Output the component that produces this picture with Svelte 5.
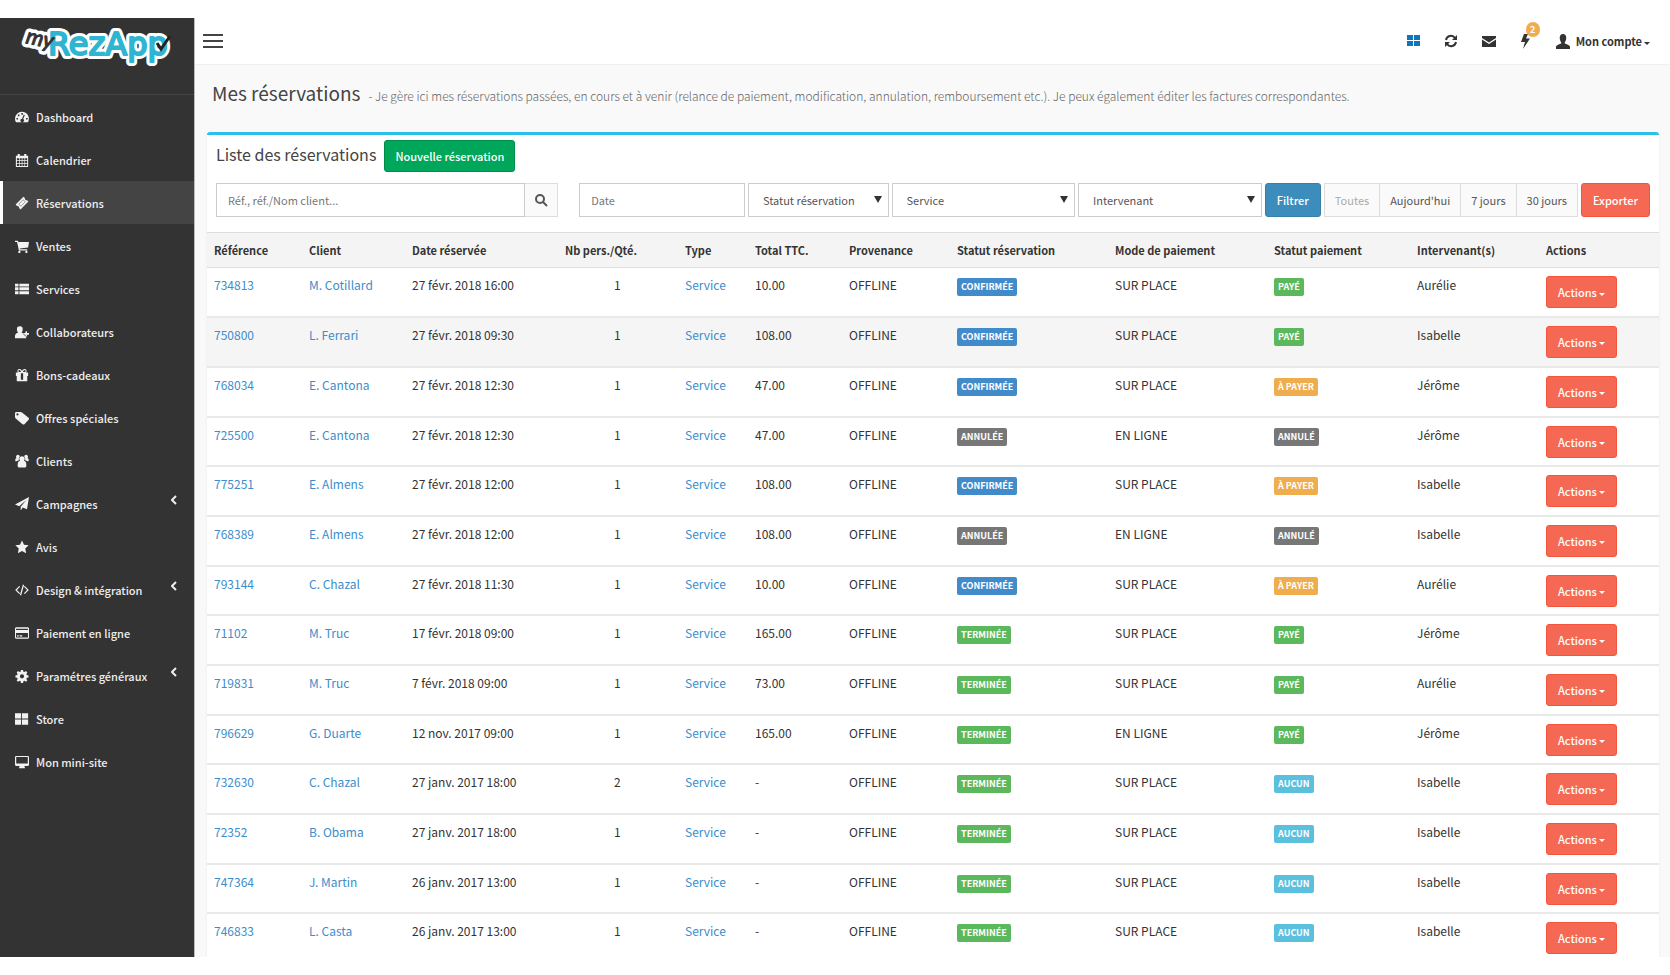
<script lang="ts">
  interface MenuItem {
    label: string;
    icon: string;
    expandable?: boolean;
  }

  interface Booking {
    ref: string;
    client: string;
    date: string;
    qty: number;
    total: string;
    status: string;
    mode: string;
    payment: string;
    staff: string;
  }

  const menu: MenuItem[] = [
    { label: 'Dashboard', icon: 'dashboard' },
    { label: 'Calendrier', icon: 'calendar' },
    { label: 'Réservations', icon: 'ticket' },
    { label: 'Ventes', icon: 'cart' },
    { label: 'Services', icon: 'list' },
    { label: 'Collaborateurs', icon: 'userplus' },
    { label: 'Bons-cadeaux', icon: 'gift' },
    { label: 'Offres spéciales', icon: 'tag' },
    { label: 'Clients', icon: 'users' },
    { label: 'Campagnes', icon: 'plane', expandable: true },
    { label: 'Avis', icon: 'star' },
    { label: 'Design & intégration', icon: 'code', expandable: true },
    { label: 'Paiement en ligne', icon: 'card' },
    { label: 'Paramétres généraux', icon: 'gear', expandable: true },
    { label: 'Store', icon: 'grid' },
    { label: 'Mon mini-site', icon: 'screen' },
  ];

  // 16x16 glyphs, filled with even-odd so inner shapes cut holes
  const icons: Record<string, string> = {
    dashboard:
      'M8 2a8 8 0 0 0-8 8c0 1.500.4 2.900 1.200 4h13.600A8 8 0 0 0 8 2zM7.200 3.500h1.800v1.800H7.200zM3.300 5.200h1.800V7H3.300zM1.700 9h1.800v1.800H1.700zM12.600 9h1.800v1.800h-1.800zM10 5.200l1.200.4-1.800 4.700a2 2 0 1 1-1.300-.4z',
    calendar:
      'M1 3h2V1h2.500v2h5V1H13v2h2v13H1zM2.200 6v2.300h2.400V6zm3.200 0v2.300h2.300V6zm3.100 0v2.300h2.300V6zm3.100 0v2.300h2.300V6zM2.200 9.200v2.300h2.400V9.200zm3.200 0v2.300h2.300V9.200zm3.100 0v2.300h2.300V9.200zm3.100 0v2.300h2.300V9.200zM2.200 12.400v2.400h2.400v-2.400zm3.200 0v2.400h2.300v-2.400zm3.100 0v2.400h2.300v-2.400zm3.100 0v2.400h2.300v-2.400z',
    ticket:
      'M9.700.8l1.600 1.600a2 2 0 0 0 2.400 2.400l1.600 1.600-9 9-1.600-1.600a2 2 0 0 0-2.400-2.400L.7 9.800zM9.300 4L4 9.300l2.700 2.700L12 6.700zM9.300 4.500l2.200 2.200-4.800 4.800-2.200-2.200z',
    cart:
      'M0 2h3.300l.5 1.500H16l-1 6.300-9.500 1 .3 1H14V13H4.500L2.400 3.300H0zM5 13.500a1.300 1.300 0 1 1 0 2.600 1.300 1.300 0 0 1 0-2.600zM13 13.500a1.300 1.300 0 1 1 0 2.600 1.300 1.300 0 0 1 0-2.600z',
    list: 'M0 2h4v3H0zM5 2h11v3H5zM0 6h4v3.500H0zM5 6h11v3.500H5zM0 10.500h4V14H0zM5 10.500h11V14H5z',
    userplus:
      'M5.500 1.500a3.300 3.300 0 0 1 3.300 3.500c0 1.700-.8 3-1.700 3.700 1.600.5 2.900 1 3.600 1.800V12h2v3H0v-2.500c0-2 1.500-3 3.900-3.800C3 8 2.200 6.700 2.200 5a3.300 3.300 0 0 1 3.300-3.500zM12 7h1.800v2.200H16V11h-2.200v2.200H12V11H9.800V9.200H12z',
    gift:
      'M1 5h2.500A2.300 2.300 0 0 1 5 1c1.500 0 2.300 1 3 2.200C8.700 2 9.500 1 11 1a2.300 2.300 0 0 1 1.500 4H15v4h-1v6H2V9H1zM5 2.300a1.100 1.100 0 1 0 0 2.300h2C6.300 3.300 5.800 2.300 5 2.300zM11 2.300c-.8 0-1.300 1-2 2.300h2a1.100 1.100 0 1 0 0-2.300zM6.700 6v7.500h2.600V6z',
    tag: 'M0 2.500C0 1.700.7 1 1.500 1H6c.7 0 1.500.3 2 .8l7.500 6c.7.700.7 1.500 0 2.200l-4.700 5c-.7.700-1.500.6-2.200 0L.8 8.500C.3 8 0 7.500 0 6.800zM2.800 2.700a1.200 1.200 0 1 0 0 2.400 1.200 1.200 0 0 0 0-2.400z',
    users:
      'M3.300.8a2.300 2.300 0 0 1 2.200 2.100A3.600 3.600 0 0 0 4.300 6c0 .6.100 1 .4 1.500H3.500L1 8.500C.3 8 0 6 .6 5.300c.5-.4 1-.5 1.300-.5A2.300 2.300 0 0 1 3.300.8zM12.700.8a2.300 2.300 0 0 0-2.200 2.100A3.600 3.600 0 0 1 11.700 6c0 .6-.1 1-.4 1.500h1.200L15 8.500c.7-.5 1-2.500.4-3.200-.5-.4-1-.5-1.300-.5A2.300 2.300 0 0 0 12.700.8zM8 2.500a3 3 0 0 1 2.200 5.200c2 .3 2.800 2 2.800 5.300 0 1.500-.8 2.500-2 2.500H5c-1.200 0-2-1-2-2.500 0-3.300.8-5 2.800-5.300A3 3 0 0 1 8 2.500z',
    plane: 'M16 0l-2.300 14-4.800-2-2.400 3.500V11L13 3.300 4.800 10.500 0 8.500z',
    star: 'M8 .5l2.300 4.900 5.300.7-3.900 3.700 1 5.300L8 12.500l-4.700 2.600 1-5.300L.4 6.100l5.300-.7z',
    code:
      'M4.800 3.300L5.800 4.300 2.200 8l3.600 3.700-1 1L.2 8zM11.200 3.300l-1 1L13.800 8l-3.600 3.700 1 1L15.800 8zM9 1.800l1.400.4-3.400 12-1.400-.4z',
    card: 'M1 1.500h14l1 1v11l-1 1H1l-1-1v-11zM1.200 3v1.500h13.600V3zM1.200 8v5.200h13.600V8zM2.300 10.700h2V12h-2zM5.300 10.700h3V12h-3z',
    gear:
      'M6.800 1h2.400l.4 2 1.200.5 1.700-1.100 1.600 1.600-1.100 1.700.5 1.200 2 .4v2.400l-2 .4-.5 1.200 1.100 1.700-1.600 1.600-1.700-1.100-1.200.5-.4 2H6.800l-.4-2-1.200-.5-1.700 1.100L1.900 13 3 11.300l-.5-1.200-2-.4V7.300l2-.4L3 5.700 1.900 4l1.600-1.600 1.700 1.100L6.400 3zM8 6a2.400 2.400 0 1 0 0 4.800A2.400 2.400 0 0 0 8 6z',
    grid: 'M0 1.500h7V7.500H0zM8 1.500h7V7.500H8zM0 8.500h7v6H0zM8 8.500h7v6H8z',
    screen: 'M1 1h14l1 1v9.500l-1 1h-4.500l.8 1.500v1H4.700v-1l.8-1.500H1l-1-1V2zM1.400 2.400v7.200h13.200V2.400z',
  };

  const columns = [
    { title: 'Référence', width: 95 },
    { title: 'Client', width: 103 },
    { title: 'Date réservée', width: 153 },
    { title: 'Nb pers./Qté.', width: 120 },
    { title: 'Type', width: 70 },
    { title: 'Total TTC.', width: 94 },
    { title: 'Provenance', width: 108 },
    { title: 'Statut réservation', width: 158 },
    { title: 'Mode de paiement', width: 159 },
    { title: 'Statut paiement', width: 143 },
    { title: 'Intervenant(s)', width: 129 },
    { title: 'Actions', width: 120 },
  ];

  const rows: Booking[] = [
    { ref: '734813', client: 'M. Cotillard', date: '27 févr. 2018 16:00', qty: 1, total: '10.00', status: 'Confirmée', mode: 'SUR PLACE', payment: 'Payé', staff: 'Aurélie' },
    { ref: '750800', client: 'L. Ferrari', date: '27 févr. 2018 09:30', qty: 1, total: '108.00', status: 'Confirmée', mode: 'SUR PLACE', payment: 'Payé', staff: 'Isabelle' },
    { ref: '768034', client: 'E. Cantona', date: '27 févr. 2018 12:30', qty: 1, total: '47.00', status: 'Confirmée', mode: 'SUR PLACE', payment: 'À payer', staff: 'Jérôme' },
    { ref: '725500', client: 'E. Cantona', date: '27 févr. 2018 12:30', qty: 1, total: '47.00', status: 'Annulée', mode: 'EN LIGNE', payment: 'Annulé', staff: 'Jérôme' },
    { ref: '775251', client: 'E. Almens', date: '27 févr. 2018 12:00', qty: 1, total: '108.00', status: 'Confirmée', mode: 'SUR PLACE', payment: 'À payer', staff: 'Isabelle' },
    { ref: '768389', client: 'E. Almens', date: '27 févr. 2018 12:00', qty: 1, total: '108.00', status: 'Annulée', mode: 'EN LIGNE', payment: 'Annulé', staff: 'Isabelle' },
    { ref: '793144', client: 'C. Chazal', date: '27 févr. 2018 11:30', qty: 1, total: '10.00', status: 'Confirmée', mode: 'SUR PLACE', payment: 'À payer', staff: 'Aurélie' },
    { ref: '71102', client: 'M. Truc', date: '17 févr. 2018 09:00', qty: 1, total: '165.00', status: 'Terminée', mode: 'SUR PLACE', payment: 'Payé', staff: 'Jérôme' },
    { ref: '719831', client: 'M. Truc', date: '7 févr. 2018 09:00', qty: 1, total: '73.00', status: 'Terminée', mode: 'SUR PLACE', payment: 'Payé', staff: 'Aurélie' },
    { ref: '796629', client: 'G. Duarte', date: '12 nov. 2017 09:00', qty: 1, total: '165.00', status: 'Terminée', mode: 'EN LIGNE', payment: 'Payé', staff: 'Jérôme' },
    { ref: '732630', client: 'C. Chazal', date: '27 janv. 2017 18:00', qty: 2, total: '-', status: 'Terminée', mode: 'SUR PLACE', payment: 'Aucun', staff: 'Isabelle' },
    { ref: '72352', client: 'B. Obama', date: '27 janv. 2017 18:00', qty: 1, total: '-', status: 'Terminée', mode: 'SUR PLACE', payment: 'Aucun', staff: 'Isabelle' },
    { ref: '747364', client: 'J. Martin', date: '26 janv. 2017 13:00', qty: 1, total: '-', status: 'Terminée', mode: 'SUR PLACE', payment: 'Aucun', staff: 'Isabelle' },
    { ref: '746833', client: 'L. Casta', date: '26 janv. 2017 13:00', qty: 1, total: '-', status: 'Terminée', mode: 'SUR PLACE', payment: 'Aucun', staff: 'Isabelle' },
  ];

  const tones: Record<string, string> = {
    'Confirmée': 'blue',
    'Terminée': 'green',
    'Annulée': 'grey',
    'Payé': 'green',
    'À payer': 'orange',
    'Annulé': 'grey',
    'Aucun': 'cyan',
  };

  const ranges = ['Toutes', "Aujourd'hui", '7 jours', '30 jours'];

  let current = $state('Réservations');
  let range = $state('Toutes');
  let hovered = $state('750800');
  let search = $state('');
  let date = $state('');
</script>

<div class="app">
  <aside class="sidebar">
    <a class="logo" href="#accueil" aria-label="myRezApp">
      <svg width="160" height="52" viewBox="0 0 160 52">
        <g stroke-linejoin="round">
          <text class="rez halo" x="32" y="36">RezApp</text>
          <text class="my halo" x="9" y="24" transform="rotate(12 9 24)">my</text>
          <text class="rez" x="32" y="36">RezApp</text>
          <text class="my" x="9" y="24" transform="rotate(12 9 24)">my</text>
        </g>
        <path d="M141 24l4 6 9-13" fill="none" stroke="#222" stroke-width="3" />
      </svg>
    </a>
    <nav>
      {#each menu as item}
        <a
          class="item"
          class:active={item.label === current}
          href="#{item.icon}"
          onclick={() => (current = item.label)}
        >
          <svg width="14" height="14" viewBox="0 0 16 16"><path d={icons[item.icon]} fill-rule="evenodd" /></svg>
          <span>{item.label}</span>
          {#if item.expandable}
            <svg class="chevron" width="6" height="10" viewBox="0 0 6 10"><path d="M5 1L1 5l4 4" /></svg>
          {/if}
        </a>
      {/each}
    </nav>
  </aside>

  <div class="page">
    <header class="topbar">
      <button class="burger" aria-label="Menu"><i></i><i></i><i></i></button>
      <div class="tools">
        <button class="tool" aria-label="Applications">
          <svg width="14" height="14" viewBox="0 0 14 14" fill="#0e76bd">
            <path d="M1 1h6v5H1zM8 1h6v5H8zM1 7h6v5H1zM8 7h6v5H8z" />
          </svg>
        </button>
        <button class="tool" aria-label="Actualiser">
          <svg width="14" height="14" viewBox="0 0 14 14" fill="none" stroke="#333" stroke-width="2">
            <path d="M2 6a5 5 0 0 1 9-2M12 8a5 5 0 0 1-9 2" />
            <path d="M13 1v5H8zM1 13V8h5z" fill="#333" stroke="none" />
          </svg>
        </button>
        <button class="tool" aria-label="Messages">
          <svg width="14" height="14" viewBox="0 0 14 14" fill="#333">
            <path d="M0 2h14v2L7 8.500 0 4zM0 5.500l7 4.500 7-4.500V13H0z" />
          </svg>
        </button>
        <button class="tool" aria-label="Notifications">
          <svg width="12" height="16" viewBox="0 0 12 16" fill="#333"><path d="M4 1h4L6 5.500h4L3 16l2-7H1z" /></svg>
          <span class="count">2</span>
        </button>
        <button class="account">
          <svg width="14" height="15" viewBox="0 0 14 15" fill="#333">
            <path d="M7 0c2 0 3.300 1.500 3.300 3.700 0 1.800-.7 3.500-1.500 4.500v1.300c2 .7 4.500 1.500 5.200 3V15H0v-2.500c.7-1.500 3.200-2.300 5.200-3V8.200C4.400 7.200 3.700 5.500 3.700 3.700 3.700 1.500 5 0 7 0z" />
          </svg>
          <span>Mon compte<span class="caret"></span></span>
        </button>
      </div>
    </header>

    <main>
      <div class="heading">
        <h1>Mes réservations</h1>
        <p>- Je gère ici mes réservations passées, en cours et à venir (relance de paiement, modification, annulation, remboursement etc.). Je peux également éditer les factures correspondantes.</p>
      </div>

      <section class="box">
        <div class="box-head">
          <h2>Liste des réservations</h2>
          <button class="btn success">Nouvelle réservation</button>
        </div>

        <form class="filters" onsubmit={(e) => e.preventDefault()}>
          <div class="search">
            <input type="text" placeholder="Réf., réf./Nom client..." aria-label="Recherche" bind:value={search} />
            <button aria-label="Rechercher">
              <svg width="14" height="14" viewBox="0 0 14 14" fill="none" stroke="#555" stroke-width="2">
                <circle cx="6" cy="6" r="4" /><path d="M9 9l4 4" />
              </svg>
            </button>
          </div>
          <input class="date" type="text" placeholder="Date" aria-label="Date" bind:value={date} />
          <div class="select status">
            <select aria-label="Statut réservation"><option>Statut réservation</option></select>
          </div>
          <div class="select">
            <select aria-label="Service"><option>Service</option></select>
          </div>
          <div class="select">
            <select aria-label="Intervenant"><option>Intervenant</option></select>
          </div>
          <button class="btn primary">Filtrer</button>
          <div class="ranges">
            {#each ranges as r}
              <button type="button" disabled={r === range} onclick={() => (range = r)}>{r}</button>
            {/each}
          </div>
          <button type="button" class="btn danger">Exporter</button>
        </form>

        <table>
          <colgroup>
            {#each columns as col}
              <col style="width: {col.width}px" />
            {/each}
          </colgroup>
          <thead>
            <tr>
              {#each columns as col}
                <th>{col.title}</th>
              {/each}
            </tr>
          </thead>
          <tbody>
            {#each rows as row}
              <tr class:hovered={row.ref === hovered} onmouseenter={() => (hovered = row.ref)}>
                <td><a href="#{row.ref}">{row.ref}</a></td>
                <td><a href="#client-{row.ref}">{row.client}</a></td>
                <td>{row.date}</td>
                <td class="qty">{row.qty}</td>
                <td><a href="#service-{row.ref}">Service</a></td>
                <td>{row.total}</td>
                <td>OFFLINE</td>
                <td><span class="label {tones[row.status]}">{row.status}</span></td>
                <td>{row.mode}</td>
                <td><span class="label {tones[row.payment]}">{row.payment}</span></td>
                <td>{row.staff}</td>
                <td><button class="btn danger">Actions<span class="caret"></span></button></td>
              </tr>
            {/each}
          </tbody>
        </table>
      </section>
    </main>
  </div>
</div>

<style>
  :global(body) {
    background: #fff;
  }

  .app {
    display: flex;
    height: calc(100vh - 36px);
    margin: 18px 0;
    overflow: hidden;
    font-family: 'Noto Sans CJK JP', 'Noto Sans', sans-serif;
    font-size: 11px;
    line-height: 20px;
    color: #333;
  }

  .app * {
    box-sizing: border-box;
  }

  button,
  input,
  select {
    margin: 0;
    font: inherit;
    color: inherit;
  }

  button {
    padding: 0;
    border: 0;
    background: none;
    cursor: pointer;
    white-space: nowrap;
  }

  a {
    color: #3c8dcb;
    text-decoration: none;
  }

  h1,
  h2,
  p {
    margin: 0;
    font-weight: 400;
  }

  /* Sidebar */
  .sidebar {
    flex: 0 0 195px;
    background: #333;
    border-right: 1px solid #bbb;
  }

  .logo {
    display: block;
    height: 77px;
    padding: 1px 0 0 16px;
    border-bottom: 1px solid #444;
  }

  .rez {
    font: 32px 'DejaVu Sans', sans-serif;
    fill: #2fb4d1;
    stroke: #2fb4d1;
    stroke-width: 2;
  }

  .my {
    font: italic 22px 'Lato', sans-serif;
    fill: #333;
    stroke: #333;
  }

  .halo {
    stroke: #fff;
    stroke-width: 8;
  }

  .item {
    display: flex;
    align-items: center;
    gap: 7px;
    height: 43px;
    padding: 0 17px 0 12px;
    border-left: 3px solid transparent;
    color: #eee;
    font-weight: 500;
    white-space: nowrap;
  }

  .item svg {
    flex: none;
    fill: #f2f2f2;
  }

  .item.active {
    background: #444;
    border-left-color: #fff;
  }

  .item .chevron {
    margin: 0 0 8px auto;
    fill: none;
    stroke: #eee;
    stroke-width: 2;
  }

  /* Top bar */
  .page {
    flex: 1;
    min-width: 0;
    background: #f9f9f9;
  }

  .topbar {
    display: flex;
    justify-content: space-between;
    align-items: center;
    height: 47px;
    padding: 0 20px 0 8px;
    background: #fff;
    border-bottom: 1px solid #f0f0f0;
  }

  .burger {
    display: flex;
    flex-direction: column;
    gap: 4px;
    width: 20px;
  }

  .burger i {
    height: 2px;
    background: #444;
  }

  .tools {
    display: flex;
    align-items: center;
    gap: 24px;
  }

  .tool {
    position: relative;
    display: flex;
  }

  .count {
    position: absolute;
    top: -11px;
    left: 6px;
    width: 14px;
    height: 15px;
    border-radius: 7px;
    background: #f0ad4e;
    color: #fff;
    font-size: 9px;
    font-weight: 700;
    line-height: 15px;
    text-align: center;
  }

  .account {
    display: flex;
    align-items: center;
    gap: 6px;
    font-weight: 700;
  }

  .caret {
    display: inline-block;
    margin-left: 2px;
    border: 3px solid transparent;
    border-top-color: currentColor;
    border-bottom: 0;
    vertical-align: middle;
  }

  /* Content */
  main {
    padding: 12px 11px 0 12px;
  }

  .heading {
    display: flex;
    align-items: baseline;
    gap: 8px;
    height: 55px;
    padding-left: 5px;
    white-space: nowrap;
  }

  h1 {
    font-size: 19px;
    line-height: 32px;
    color: #444;
  }

  .heading p {
    font-size: 12px;
    font-weight: 300;
    color: #666;
  }

  .box {
    background: #fff;
    border-top: 3px solid #2bc0ea;
    border-radius: 3px;
    box-shadow: 0 1px 2px rgba(0, 0, 0, 0.1);
  }

  .box-head {
    display: flex;
    gap: 8px;
    padding: 5px 9px 0;
  }

  h2 {
    font-size: 16px;
    line-height: 28px;
    color: #444;
  }

  .btn {
    flex: none;
    height: 32px;
    padding: 0 11px;
    border: 1px solid;
    border-radius: 3px;
    color: #fff;
    line-height: 20px;
  }

  .success {
    padding: 0 10px;
    background: #00a65a;
    border-color: #008d4c;
    font-weight: 500;
  }

  .primary {
    background: #3c8dbc;
    border-color: #367fa9;
  }

  .danger {
    background: #f56954;
    border-color: #f4543c;
  }

  .filters {
    display: flex;
    gap: 3px;
    padding: 11px 9px 15px;
  }

  .filters .btn {
    height: 34px;
    font-weight: 500;
  }

  .filters input,
  select {
    width: 100%;
    min-width: 0;
    height: 34px;
    padding: 0 11px;
    border: 1px solid #ccc;
    border-radius: 0;
    background: #fff;
    color: #555;
    outline: none;
  }

  .filters input::placeholder {
    color: #777;
    opacity: 1;
  }

  .search {
    display: flex;
    flex: 1 1 343px;
    margin-right: 18px;
  }

  .search button {
    flex: none;
    width: 33px;
    border: 1px solid #ddd;
    border-left: 0;
    background: #fafafa;
    line-height: 0;
  }

  .filters .date {
    flex: 1 1 166px;
  }

  .select {
    position: relative;
    flex: 1 1 184px;
  }

  .select.status {
    flex-basis: 141px;
  }

  select {
    appearance: none;
    padding: 0 14px;
  }

  .select::after {
    content: '';
    position: absolute;
    top: 13px;
    right: 7px;
    border: 4px solid transparent;
    border-top: 7px solid #333;
    border-bottom: 0;
    pointer-events: none;
  }

  .ranges {
    display: flex;
    border: 1px solid #ddd;
  }

  .ranges button {
    padding: 0 10px;
    background: #fafafa;
    color: #555;
  }

  .ranges button + button {
    border-left: 1px solid #ddd;
  }

  .ranges button:disabled {
    color: #aaa;
    cursor: default;
  }

  /* Bookings table */
  table {
    width: 100%;
    border-collapse: collapse;
    table-layout: fixed;
  }

  th,
  td {
    padding: 7px 7px 0;
    text-align: left;
    vertical-align: top;
    white-space: nowrap;
  }

  th {
    height: 35px;
    background: #f4f4f4;
    border-top: 1px solid #ddd;
    border-bottom: 1px solid #ddd;
    font-weight: 700;
  }

  td {
    height: 50px;
    border-bottom: 2px solid #e9e9e9;
    font-size: 12px;
  }

  tr:nth-child(3n + 1) td {
    height: 49px;
  }

  .hovered td {
    background: #f5f5f5;
  }

  .qty {
    padding-left: 56px;
  }

  td .btn {
    display: block;
    margin-top: 1px;
    font-size: 11px;
    font-weight: 500;
  }

  .label {
    display: inline-block;
    height: 18px;
    padding: 0 4px;
    border-radius: 2px;
    color: #fff;
    font-size: 9px;
    font-weight: 700;
    line-height: 18px;
    text-transform: uppercase;
  }

  .blue { background: #428bca; }
  .green { background: #5cb85c; }
  .grey { background: #777; }
  .orange { background: #f0ad4e; }
  .cyan { background: #5bc0de; }
</style>
